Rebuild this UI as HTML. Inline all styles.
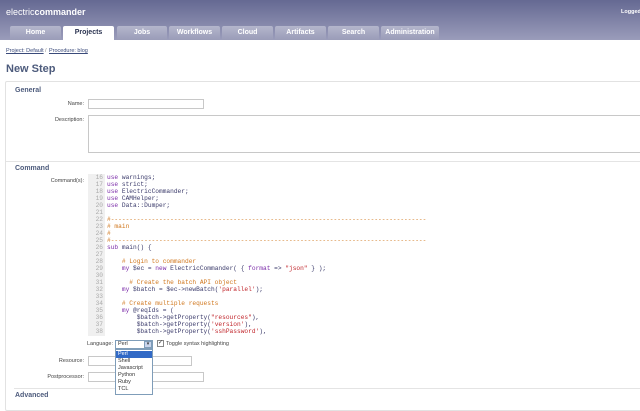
<!DOCTYPE html><html><head><style>
*{margin:0;padding:0;box-sizing:border-box}
body{width:640px;height:400px;overflow:hidden;background:#fff;font-family:"Liberation Sans",sans-serif;font-size:6px;color:#333;position:relative}
.a{position:absolute}
#hd{left:0;top:0;width:640px;height:40px;background:linear-gradient(#656992,#9a9cba)}
.tab{position:absolute;top:26px;height:14px;background:linear-gradient(#b4b6cc,#9a9cb8);color:#fff;font-weight:bold;font-size:7px;text-align:center;line-height:14px;border-top-left-radius:2px;border-top-right-radius:2px}
.tab.on{background:#fff;color:#2d3552}
.lbl{position:absolute;text-align:right;width:60px;left:24px;font-size:5.5px;color:#444}
.inp{position:absolute;border:1px solid #c8c8c8;background:#fff}
.sec{position:absolute;left:15px;font-size:7px;font-weight:bold;color:#4d5b7c}
#code{left:88px;top:174px;width:552px;height:162px;font-family:"Liberation Mono",monospace;font-size:6.2px;line-height:7px;white-space:pre;overflow:hidden}
#gut{left:88px;top:174px;width:17px;height:162px;background:#f0f0f0;color:#aaa;text-align:right;padding-right:2px}
.k{color:#7a2aa8}.c{color:#d0771e}.s{color:#c0242a}.n{color:#3a3a6a}
.dd div{padding-left:2px;height:7px;line-height:7px;font-size:5.5px}
</style></head><body>
<div id="hd" class="a"></div>
<div class="a" style="left:6px;top:7px;color:#fff;font-size:9px">electric<b>commander</b></div>
<div class="a" style="left:621px;top:9px;color:#fff;font-size:5.5px;font-weight:bold">Logged</div>
<div class="tab" style="left:10px;width:51px">Home</div>
<div class="tab on" style="left:63px;width:51px">Projects</div>
<div class="tab" style="left:117px;width:50px">Jobs</div>
<div class="tab" style="left:169px;width:51px">Workflows</div>
<div class="tab" style="left:222px;width:51px">Cloud</div>
<div class="tab" style="left:275px;width:51px">Artifacts</div>
<div class="tab" style="left:328px;width:51px">Search</div>
<div class="tab" style="left:381px;width:58px">Administration</div>
<div class="a" style="left:6px;top:48px;font-size:5.5px;color:#3a4a7a;text-decoration:underline">Project: Default</div>
<div class="a" style="left:45px;top:48px;font-size:5.5px;color:#888">/</div>
<div class="a" style="left:49px;top:48px;font-size:5.5px;color:#3a4a7a;text-decoration:underline">Procedure: blog</div>
<div class="a" style="left:6px;top:63px;font-size:11px;font-weight:bold;color:#4d5b7c">New Step</div>
<div class="a" style="left:5px;top:81px;width:640px;height:330px;border:1px solid #e2e2e2;border-radius:2px"></div>
<div class="sec" style="top:87px">General</div>
<div class="lbl" style="top:101px">Name:</div>
<div class="inp" style="left:88px;top:99px;width:116px;height:10px"></div>
<div class="lbl" style="top:117px">Description:</div>
<div class="inp" style="left:88px;top:115px;width:560px;height:38px"></div>
<div class="a" style="left:6px;top:161px;width:640px;border-top:1px solid #e4e4e4"></div>
<div class="sec" style="top:165px">Command</div>
<div class="lbl" style="top:178px">Command(s):</div>
<div id="gut" class="a" style="font-family:'Liberation Mono',monospace;font-size:6.2px;line-height:7px;white-space:pre">16
17
18
19
20
21
22
23
24
25
26
27
28
29
30
31
32
33
34
35
36
37
38</div>
<div id="code" class="a" style="left:107px;width:533px"><span class="k">use</span> <span class="n">warnings;</span>
<span class="k">use</span> <span class="n">strict;</span>
<span class="k">use</span> <span class="n">ElectricCommander;</span>
<span class="k">use</span> <span class="n">CAMHelper;</span>
<span class="k">use</span> <span class="n">Data::Dumper;</span>

<span class="c">#-------------------------------------------------------------------------------------</span>
<span class="c"># main</span>
<span class="c">#</span>
<span class="c">#-------------------------------------------------------------------------------------</span>
<span class="k">sub</span> <span class="n">main() {</span>

    <span class="c"># Login to commander</span>
    <span class="k">my</span> <span class="n">$ec = </span><span class="k">new</span> <span class="n">ElectricCommander( { </span><span class="k">format</span> <span class="n">=&gt;</span> <span class="s">"json"</span> <span class="n">} );</span>

      <span class="c"># Create the batch API object</span>
    <span class="k">my</span> <span class="n">$batch = $ec-&gt;newBatch(</span><span class="s">'parallel'</span><span class="n">);</span>

    <span class="c"># Create multiple requests</span>
    <span class="k">my</span> <span class="n">@reqIds = (</span>
        <span class="n">$batch-&gt;getProperty(</span><span class="s">"resources"</span><span class="n">),</span>
        <span class="n">$batch-&gt;getProperty(</span><span class="s">'version'</span><span class="n">),</span>
        <span class="n">$batch-&gt;getProperty(</span><span class="s">'sshPassword'</span><span class="n">),</span></div>
<div class="a" style="left:87px;top:341px;font-size:5.5px;color:#444">Language:</div>
<div class="inp" style="left:115px;top:340px;width:38px;height:9px;border-color:#7f9db9;font-size:5.5px;padding-left:2px;line-height:7px">Perl</div>
<div class="a" style="left:144px;top:341px;width:8px;height:7px;background:#c8d4ec;border:1px solid #7f9db9;font-size:5px;text-align:center;line-height:5px">▾</div>
<div class="a" style="left:157px;top:340px;width:7px;height:7px;border:1px solid #888;font-size:6px;line-height:5px;text-align:center">✓</div>
<div class="a" style="left:166px;top:341px;font-size:5.5px;color:#444">Toggle syntax highlighting</div>
<div class="lbl" style="top:358px">Resource:</div>
<div class="inp" style="left:88px;top:356px;width:104px;height:10px"></div>
<div class="lbl" style="top:374px">Postprocessor:</div>
<div class="inp" style="left:88px;top:372px;width:116px;height:10px"></div>
<div class="a" style="left:14px;top:388px;width:640px;border-top:1px solid #e4e4e4"></div>
<div class="sec" style="top:392px">Advanced</div>
<div class="a dd" style="left:115px;top:349px;width:38px;height:46px;border:1px solid #7f9db9;background:#fff;padding-top:1px;z-index:10">
<div style="background:#3169c6;color:#fff">Perl</div>
<div>Shell</div><div>Javascript</div><div>Python</div><div>Ruby</div><div>TCL</div></div>
</body></html>
